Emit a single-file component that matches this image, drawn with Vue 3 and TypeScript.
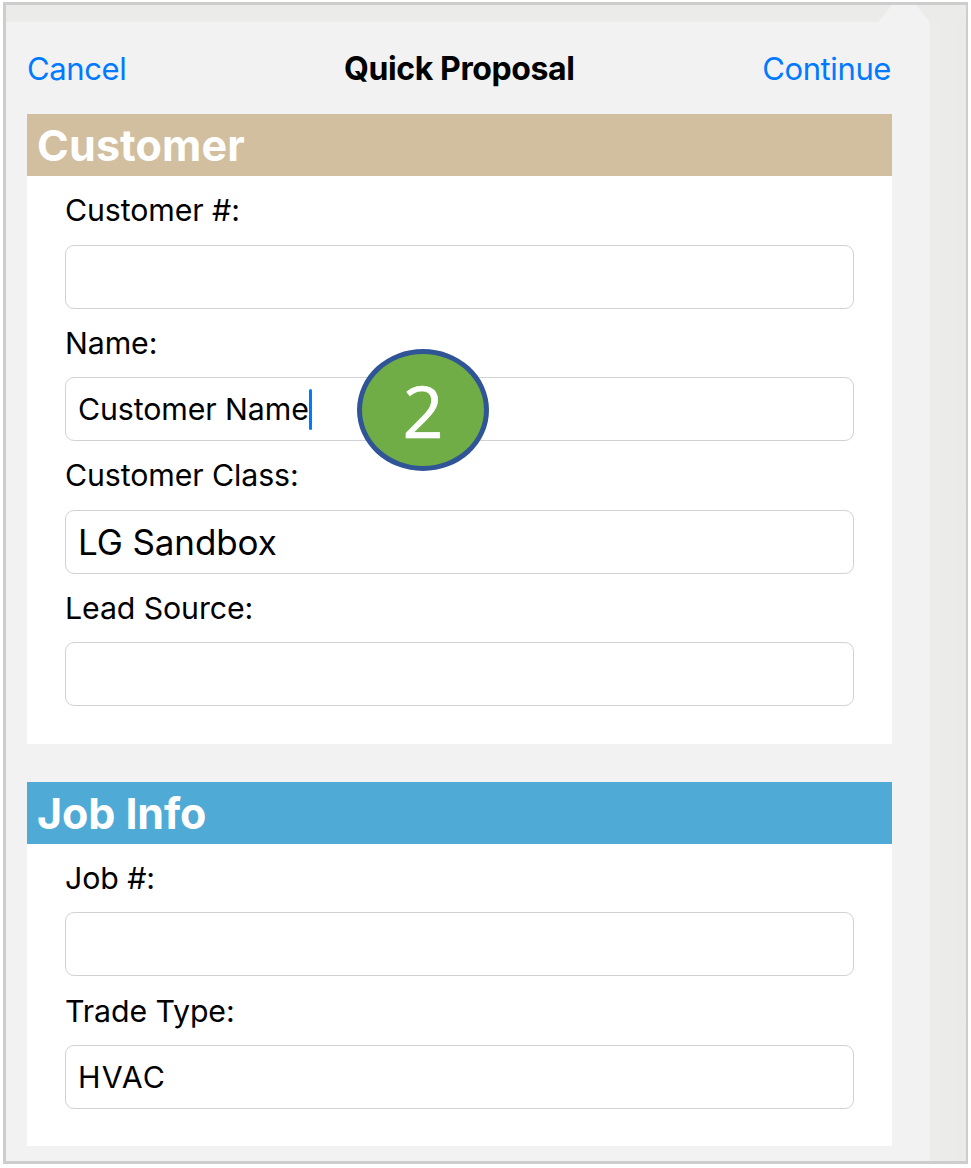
<template>
  <div class="frame">
    <div class="top-strip">
      <div class="arrow"></div>
    </div>
    <div class="sheet-row">
      <div class="sheet">
        <div class="nav">
          <span class="nav-btn">Cancel</span>
          <span class="nav-title">Quick Proposal</span>
          <span class="nav-btn">Continue</span>
        </div>
        <section v-for="section in sections" :key="section.title" class="section" :class="section.cls">
          <h2 class="section-title" :class="section.color">{{ section.title }}</h2>
          <div class="fields">
            <div v-for="field in section.fields" :key="field.label" class="field">
              <label class="label">{{ field.label }}</label>
              <div class="input" :class="field.cls">
                <span>{{ field.value }}</span>
                <i v-if="field.caret" class="caret"></i>
              </div>
            </div>
          </div>
        </section>
      </div>
      <div class="side-strip"></div>
    </div>
    <div class="badge">2</div>
  </div>
</template>

<script setup lang="ts">
interface Field {
  label: string;
  value: string;
  cls?: string;
  caret?: boolean;
}

const customerFields: Field[] = [
  { label: 'Customer #:', value: '' },
  { label: 'Name:', value: 'Customer Name', caret: true },
  { label: 'Customer Class:', value: 'LG Sandbox', cls: 'big' },
  { label: 'Lead Source:', value: '' },
];

const jobFields: Field[] = [
  { label: 'Job #:', value: '' },
  { label: 'Trade Type:', value: 'HVAC', cls: 'wide' },
];

const sections = [
  { title: 'Customer', color: 'tan', cls: 'customer', fields: customerFields },
  { title: 'Job Info', color: 'blue', cls: 'job', fields: jobFields },
];
</script>

<style>
html, body {
  margin: 0;
  background: #fff;
}
</style>

<style scoped>
.frame {
  position: relative;
  box-sizing: border-box;
  width: 965px;
  height: 1162px;
  margin: 2px 0 0 3px;
  border: 3px solid #cdcdcd;
  border-right-width: 2px;
  background: #ebebe9;
  overflow: hidden;
  font-family: Inter, "Liberation Sans", sans-serif;
  color: #000;
}

.top-strip {
  position: relative;
  height: 17px;
}

.arrow {
  position: absolute;
  left: 872px;
  top: 0;
  width: 52px;
  height: 17px;
  background: #f2f2f2;
  clip-path: polygon(0 100%, 14px 0, 38px 0, 100% 100%);
}

.sheet-row {
  display: flex;
  height: 1140px;
}

.sheet {
  width: 924px;
  background: #f2f2f2;
  padding: 0 38px 0 21px;
  box-sizing: border-box;
}

.side-strip {
  flex: 1;
  background: linear-gradient(to right, #ececea, #eaeae8);
}

.nav {
  height: 92px;
  display: flex;
  align-items: center;
  justify-content: space-between;
  padding: 0 1px 0 0;
  font-size: 31px;
  letter-spacing: -0.4px;
}

.nav-btn {
  color: #007aff;
}

.nav-title {
  font-weight: 700;
  font-size: 32px;
  position: relative;
  left: 15px;
}

.section {
  background: #fff;
  margin-bottom: 38px;
}

.section.customer {
  height: 630px;
}

.section.job {
  height: 364px;
}

.section-title {
  margin: 0;
  height: 62px;
  line-height: 62px;
  padding-left: 10px;
  color: #fff;
  font-size: 43px;
  font-weight: 700;
  letter-spacing: -0.1px;
}

.customer .section-title {
  letter-spacing: 0.15px;
}

.tan {
  background: #d2bfa0;
}

.blue {
  background: #4faad6;
}

.fields {
  padding: 0 38px;
  display: flex;
  flex-direction: column;
  gap: 17px;
}

.customer .fields {
  gap: 16.33px;
}

.field {
  display: flex;
  flex-direction: column;
}

.label {
  height: 52px;
  padding-top: 16px;
  box-sizing: border-box;
  line-height: 36px;
  font-size: 30.3px;
  letter-spacing: -0.1px;
  margin-bottom: 16.3px;
  margin-top: -16.3px;
}

.field:first-child .label {
  margin-top: 0;
  margin-bottom: 16px;
}

.customer .field:first-child .label {
  margin-bottom: 17px;
}

.input {
  box-sizing: border-box;
  height: 64px;
  border: 1px solid #d2d2d2;
  border-radius: 9px;
  background: #fff;
  display: flex;
  align-items: center;
  padding-left: 12px;
  font-size: 30.3px;
  letter-spacing: -0.1px;
}

.input.big {
  font-size: 35px;
}

.input.wide {
  letter-spacing: 1.2px;
}

.caret {
  display: inline-block;
  width: 3px;
  height: 41px;
  border-radius: 2px;
  background: #007aff;
}

.badge {
  position: absolute;
  left: 351px;
  top: 344px;
  box-sizing: border-box;
  width: 132px;
  height: 122px;
  border: 5px solid #2f5597;
  border-radius: 50%;
  background: #70ad47;
  color: #fff;
  font-family: "Open Sans", sans-serif;
  font-size: 72px;
  font-weight: 500;
  -webkit-text-stroke: 0.6px #fff;
  display: flex;
  align-items: center;
  justify-content: center;
}
</style>
